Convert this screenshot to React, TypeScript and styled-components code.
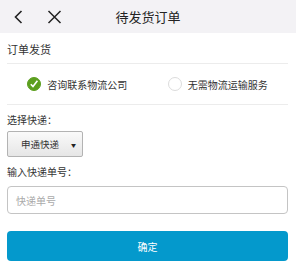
import React from "react";
import styled, { createGlobalStyle } from "styled-components";

const Global = createGlobalStyle`
  html, body { margin: 0; padding: 0; background: #fff; }
  body { font-family: "Noto Sans CJK SC", "Noto Sans", sans-serif; color: #333; }
  * { box-sizing: border-box; }
`;

const Page = styled.div`
  width: 296px;
  height: 269px;
  display: flex;
  flex-direction: column;
  background: #fff;
`;

const Header = styled.div`
  height: 33px;
  background: #f3f2f5;
  display: grid;
  grid-template-columns: 80px 1fr 80px;
  align-items: center;
`;

const NavIcons = styled.div`
  display: flex;
  align-items: center;
  gap: 23px;
  padding-left: 13px;
  color: #222;
`;

const Title = styled.div`
  text-align: center;
  font-size: 13px;
  color: #222;
`;

const Body = styled.div`
  padding: 0 8px 0 7px;
  display: flex;
  flex-direction: column;
`;

const SectionTitle = styled.div`
  height: 31px;
  display: flex;
  align-items: center;
  font-size: 11px;
  border-bottom: 1px solid #ececec;
  padding-top: 2px;
`;

const RadioRow = styled.div`
  height: 41px;
  display: grid;
  grid-template-columns: 1fr 1fr;
  align-items: center;
  border-bottom: 1px solid #ececec;
`;

const RadioOption = styled.div`
  display: flex;
  align-items: center;
  justify-content: center;
  gap: 6px;
  font-size: 10px;
  color: #333;
`;

const RadioCircle = styled.span<{ $checked?: boolean }>`
  width: 14px;
  height: 14px;
  border-radius: 50%;
  display: flex;
  align-items: center;
  justify-content: center;
  background: ${(p) => (p.$checked ? "#5c9f1f" : "#fff")};
  border: 1px solid ${(p) => (p.$checked ? "#5c9f1f" : "#dcdcdc")};
`;

const Label = styled.div<{ $top: number }>`
  font-size: 10px;
  margin-top: ${(p) => p.$top}px;
  height: 14px;
  line-height: 14px;
`;

const Select = styled.div`
  margin-top: 4px;
  width: 76px;
  height: 26px;
  border: 1px solid #b3b3b3;
  border-radius: 2px;
  background: linear-gradient(#fafafa, #e6e6e6);
  display: flex;
  align-items: center;
  justify-content: space-between;
  padding: 0 6px 0 13px;
  font-size: 9.5px;
  color: #333;
`;

const Arrow = styled.span`
  font-size: 5px;
  color: #222;
`;

const Input = styled.div`
  margin-top: 7px;
  height: 28px;
  border: 1px solid #c4c4c4;
  border-radius: 4px;
  display: flex;
  align-items: center;
  padding-left: 8px;
  font-size: 10px;
  color: #aaa;
`;

const Button = styled.div`
  margin-top: 17px;
  height: 30px;
  border-radius: 4px;
  background: #0499cc;
  color: #fff;
  font-size: 10px;
  display: flex;
  align-items: center;
  justify-content: center;
`;

export default function App() {
  return (
    <Page>
      <Global />
      <Header>
        <NavIcons>
          <svg width="11" height="14" viewBox="0 0 11 14">
            <path d="M8.5 1 L2.5 7 L8.5 13" fill="none" stroke="#222" strokeWidth="1.6" />
          </svg>
          <svg width="15" height="14" viewBox="0 0 15 14">
            <path d="M1.5 1 L13.5 13 M13.5 1 L1.5 13" fill="none" stroke="#222" strokeWidth="1.5" />
          </svg>
        </NavIcons>
        <Title>待发货订单</Title>
        <div />
      </Header>
      <Body>
        <SectionTitle>订单发货</SectionTitle>
        <RadioRow>
          <RadioOption>
            <RadioCircle $checked>
              <svg width="10" height="10" viewBox="0 0 10 10">
                <path d="M1.8 5.2 L4 7.6 L8.4 1.8" fill="none" stroke="#fff" strokeWidth="1.6" />
              </svg>
            </RadioCircle>
            咨询联系物流公司
          </RadioOption>
          <RadioOption>
            <RadioCircle />
            无需物流运输服务
          </RadioOption>
        </RadioRow>
        <Label $top={8}>选择快递：</Label>
        <Select>
          <span>申通快递</span>
          <Arrow>▼</Arrow>
        </Select>
        <Label $top={8}>输入快递单号：</Label>
        <Input>快递单号</Input>
        <Button>确定</Button>
      </Body>
    </Page>
  );
}
